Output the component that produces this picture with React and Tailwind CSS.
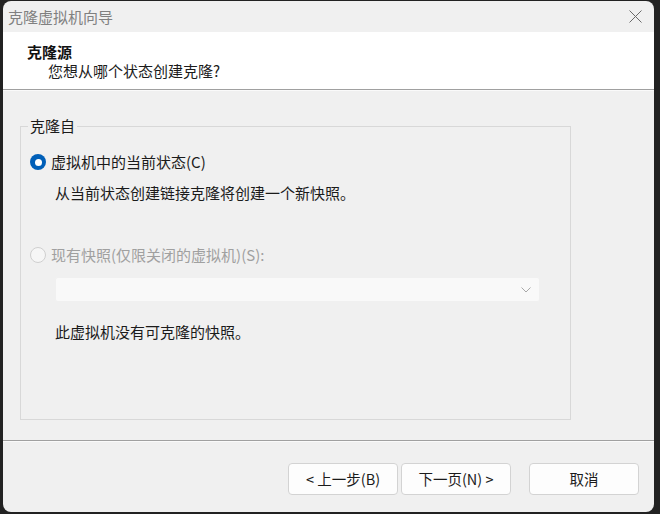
import React from "react";

function RadioOn() {
  return (
    <span className="flex h-[16px] w-[16px] items-center justify-center rounded-full bg-[#005fb8]">
      <span className="h-[7px] w-[7px] rounded-full bg-white" />
    </span>
  );
}

function RadioOff() {
  return (
    <span className="h-[16px] w-[16px] rounded-full border border-[#cfcfcf] bg-[#f6f6f6]" />
  );
}

function Btn({ children }) {
  return (
    <button className="flex h-[32px] w-[110px] items-center justify-center rounded-[4px] border border-[#d3d3d3] bg-[#fdfdfd] text-[14.5px] text-[#1b1b1b]">
      {children}
    </button>
  );
}

export default function App() {
  return (
    <div className="h-[514px] w-[660px] overflow-hidden bg-[#222222] pl-[3px] pt-[1px] font-['Noto_Sans_CJK_SC',sans-serif]">
      <div className="flex h-[511px] w-[651px] flex-col overflow-hidden rounded-[8px] bg-[#f0f0f0]">
        {/* title bar */}
        <div className="flex h-[31px] shrink-0 items-center justify-between pl-[5px] pr-[12px]">
          <span className="text-[15px] leading-[20px] text-[#808080]">克隆虚拟机向导</span>
          <svg width="13" height="13" viewBox="0 0 13 13">
            <path d="M0.5 0.5 L12.5 12.5 M12.5 0.5 L0.5 12.5" stroke="#6a6a6a" strokeWidth="1" fill="none" />
          </svg>
        </div>
        {/* header */}
        <div className="h-[58px] shrink-0 border-b border-[#a0a0a0] bg-white pl-[24px] pt-[10px]">
          <div className="text-[15px] font-bold leading-[19px] text-[#111]">克隆源</div>
          <div className="ml-[21px] text-[15px] leading-[19px] text-[#1b1b1b]">您想从哪个状态创建克隆?</div>
        </div>
        <div className="h-[1px] shrink-0 bg-[#fafafa]" />
        {/* body */}
        <div className="h-[349px] shrink-0">
          <fieldset className="ml-[17px] mt-[25px] h-[304px] w-[551px] border border-[#d8d8d8] pl-[9px]">
            <legend className="-ml-[2px] px-[2px] text-[15px] leading-[20px] text-[#1b1b1b]">克隆自</legend>
            <div className="mt-[16px] flex h-[20px] items-center gap-[5px]">
              <RadioOn />
              <span className="text-[15px] leading-[20px] text-[#1b1b1b]">虚拟机中的当前状态(C)</span>
            </div>
            <div className="mt-[11px] pl-[25px] text-[15px] leading-[20px] text-[#1b1b1b]">
              从当前状态创建链接克隆将创建一个新快照。
            </div>
            <div className="mt-[42px] flex h-[20px] items-center gap-[5px]">
              <RadioOff />
              <span className="text-[15px] leading-[20px] text-[#a0a0a0]">现有快照(仅限关闭的虚拟机)(S):</span>
            </div>
            <div className="ml-[25px] mt-[12px] flex h-[25px] w-[485px] items-center justify-end rounded-[3px] border border-[#f0f0f0] bg-[#f9f9f9] pr-[8px]">
              <svg width="10" height="6" viewBox="0 0 10 6">
                <path d="M0.5 0.5 L5 5 L9.5 0.5" stroke="#a8a8a8" strokeWidth="1" fill="none" />
              </svg>
            </div>
            <div className="ml-[25px] mt-[20px] text-[15px] leading-[20px] text-[#1b1b1b]">此虚拟机没有可克隆的快照。</div>
          </fieldset>
        </div>
        {/* footer */}
        <div className="flex-1 border-t border-[#a0a0a0]">
          <div className="h-[1px] bg-[#fafafa]" />
          <div className="flex justify-end pr-[15px] pt-[21px]">
            <Btn>&lt; 上一步(B)</Btn>
            <div className="ml-[3px]">
              <Btn>下一页(N) &gt;</Btn>
            </div>
            <div className="ml-[18px]">
              <Btn>取消</Btn>
            </div>
          </div>
        </div>
      </div>
    </div>
  );
}
